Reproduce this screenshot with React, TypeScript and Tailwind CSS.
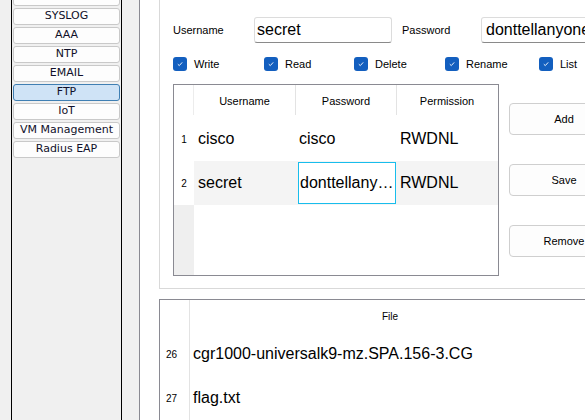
import React from "react";

const sideItems = ["DNS", "SYSLOG", "AAA", "NTP", "EMAIL", "FTP", "IoT", "VM Management", "Radius EAP"];

function Check() {
  return (
    <div className="w-[14px] h-[14px] rounded-[3px] bg-[#135fbf] flex items-center justify-center shrink-0">
      <svg width="8" height="8" viewBox="0 0 8 8">
        <path d="M1.8 4.2 L3.3 5.6 L6.2 2.4" stroke="white" strokeWidth="0.9" fill="none" />
      </svg>
    </div>
  );
}

export default function App() {
  const perms = [
    { l: "Write", w: "w-[91px]" },
    { l: "Read", w: "w-[90px]" },
    { l: "Delete", w: "w-[91px]" },
    { l: "Rename", w: "w-[94px]" },
    { l: "List", w: "w-[60px]" },
  ];
  return (
    <div className="w-[585px] h-[420px] overflow-hidden flex bg-[#f0f0f0] font-['Liberation_Sans',Arial,sans-serif] text-black">
      <div className="w-[11px] shrink-0" />
      <div className="w-[111px] shrink-0 border-x border-black bg-[#f0f0f0] overflow-hidden">
        <div className="-mt-[11px] flex flex-col gap-[2px] px-[1px]">
          {sideItems.map((s) => (
            <div
              key={s}
              className={
                "h-[17px] rounded-[3px] border flex items-center justify-center text-[11px] font-['DejaVu_Sans',sans-serif] text-[#10102a] " +
                (s === "FTP" ? "bg-[#cfe3f6] border-[#3f7fb3]" : "bg-[#fdfdfd] border-[#c9c9c9]")
              }
            >
              {s}
            </div>
          ))}
        </div>
      </div>
      <div className="w-[17px] shrink-0" />
      <div className="flex-1 border-l border-[#8a8a92] bg-white overflow-hidden pl-[19px]">
        <div className="w-[500px] h-[289px] border-l border-b border-[#d9d9d9] pl-[13px] pt-[17px]">
          <div className="flex items-center h-[26px]">
            <div className="w-[81px] text-[11px]">Username</div>
            <div className="w-[138px] h-[26px] rounded-[3px] border border-[#dcdcdc] border-b-[#8a8a8a] flex items-center pl-[2px] text-[16px]">
              secret
            </div>
            <div className="ml-[10px] w-[79px] text-[11px]">Password</div>
            <div className="w-[110px] h-[26px] rounded-[3px] border border-[#dcdcdc] border-b-[#8a8a8a] flex items-center pl-[4px] text-[16px] whitespace-nowrap">
              donttellanyone
            </div>
          </div>
          <div className="flex items-center mt-[14px] h-[14px]">
            {perms.map((p) => (
              <div key={p.l} className={"flex items-center gap-[7px] shrink-0 " + p.w}>
                <Check />
                <span className="text-[11px]">{p.l}</span>
              </div>
            ))}
          </div>
          <div className="flex mt-[13px]">
            <div className="w-[326px] h-[192px] border border-[#8a8a92] flex flex-col shrink-0">
              <div className="h-[32px] flex text-[11px] bg-white">
                <div className="w-[20px] border-r border-[#ececec] h-[30px]" />
                <div className="w-[101px] flex items-center justify-center h-[32px]">Username</div>
                <div className="w-[101px] flex items-center justify-center h-[30px] border-l border-[#e3e3e3] pt-[2px]">Password</div>
                <div className="w-[101px] flex items-center justify-center h-[30px] border-l border-[#e3e3e3] pt-[2px]">Permission</div>
              </div>
              <div className="h-[44px] flex items-center text-[16px]">
                <div className="w-[20px] text-[10px] text-center">1</div>
                <div className="w-[101px] pl-[4px]">cisco</div>
                <div className="w-[101px] pl-[4px]">cisco</div>
                <div className="w-[101px] pl-[4px]">RWDNL</div>
              </div>
              <div className="h-[44px] flex text-[16px]">
                <div className="w-[20px] text-[10px] flex items-center justify-center bg-white">2</div>
                <div className="flex-1 flex bg-[#f4f4f4]">
                  <div className="w-[101px] pl-[4px] flex items-center">secret</div>
                  <div className="w-[101px] pl-[3px] pt-[1px] pb-[1px]">
                    <div className="h-full border border-[#18bdec] bg-white flex items-center pl-[1px] overflow-hidden">
                      <span className="block w-full truncate">donttellanyone</span>
                    </div>
                  </div>
                  <div className="w-[101px] pl-[4px] flex items-center">RWDNL</div>
                </div>
              </div>
              <div className="flex-1 flex">
                <div className="w-[20px] bg-[#efefef]" />
                <div className="flex-1 bg-white" />
              </div>
            </div>
            <div className="ml-[10px] pt-[19px] flex flex-col gap-[29px]">
              {["Add", "Save", "Remove"].map((b) => (
                <div
                  key={b}
                  className="w-[110px] h-[32px] rounded-[4px] border border-[#cfcfcf] bg-[#fdfdfd] flex items-center justify-center text-[11px]"
                >
                  {b}
                </div>
              ))}
            </div>
          </div>
        </div>
        <div className="mt-[10px] w-[500px] h-[200px] border-t border-l border-[#8a8a92] flex flex-col">
          <div className="h-[32px] flex shrink-0">
            <div className="w-[30px] border-r border-[#e3e3e3]" />
            <div className="w-[400px] flex items-center justify-center text-[10px]">File</div>
          </div>
          {[
            ["26", "cgr1000-universalk9-mz.SPA.156-3.CG"],
            ["27", "flag.txt"],
          ].map(([n, f]) => (
            <div key={n} className="h-[44px] flex shrink-0">
              <div className="w-[30px] border-r border-[#e3e3e3] flex items-center pl-[6px] text-[10px]">{n}</div>
              <div className="flex-1 flex items-center pl-[3px] text-[16px] whitespace-nowrap">{f}</div>
            </div>
          ))}
        </div>
      </div>
    </div>
  );
}
